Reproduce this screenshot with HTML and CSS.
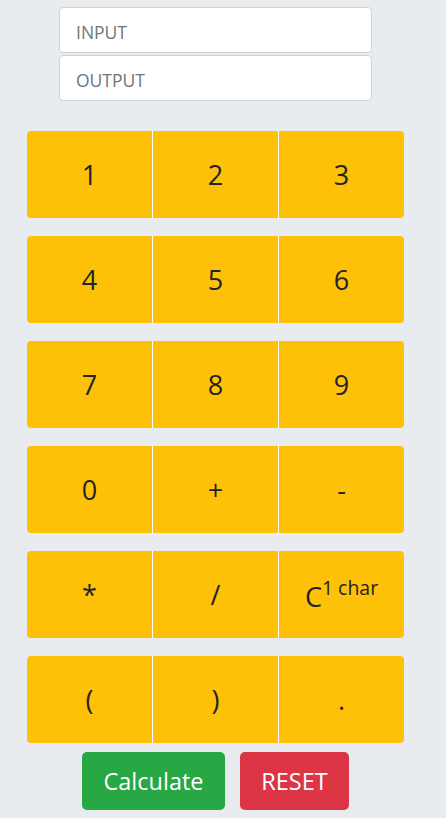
FILE: index.html
```html
<!DOCTYPE html>
<html lang="en">
<head>
<meta charset="utf-8">
<title>Calculator</title>
<link rel="stylesheet" href="styles.css">
</head>
<body>
<div class="page">
  <div class="fields">
    <input class="field" type="text" placeholder="INPUT">
    <input class="field" type="text" placeholder="OUTPUT">
  </div>
  <div class="pad">
    <div class="row"><button class="key">1</button><button class="key">2</button><button class="key">3</button></div>
    <div class="row"><button class="key">4</button><button class="key">5</button><button class="key">6</button></div>
    <div class="row"><button class="key">7</button><button class="key">8</button><button class="key">9</button></div>
    <div class="row"><button class="key">0</button><button class="key">+</button><button class="key">-</button></div>
    <div class="row"><button class="key">*</button><button class="key">/</button><button class="key">C<sup class="sup">1 char</sup></button></div>
    <div class="row"><button class="key">(</button><button class="key">)</button><button class="key">.</button></div>
  </div>
  <div class="actions">
    <button class="act calc">Calculate</button>
    <button class="act reset">RESET</button>
  </div>
</div>
</body>
</html>
```

FILE: styles.css
```css
html, body {
  margin: 0;
  padding: 0;
  background: #e9ecef;
}
body {
  font-family: "Open Sans", "Noto Sans", "Liberation Sans", sans-serif;
  color: #212529;
}
.page {
  width: 431px;
  display: flex;
  flex-direction: column;
  align-items: center;
  padding-top: 7px;
}
.fields {
  width: 313px;
  display: flex;
  flex-direction: column;
  gap: 2px;
}
.field {
  box-sizing: border-box;
  width: 313px;
  height: 46px;
  margin: 0;
  padding: 3px 16px 0;
  border: 1px solid #ced4da;
  border-radius: 4px;
  background: #fff;
  font-family: inherit;
  font-size: 17.5px;
  color: #495057;
  outline: none;
}
.field::placeholder {
  color: #6c757d;
  opacity: 1;
}
.pad {
  margin-top: 30px;
  width: 377px;
  display: flex;
  flex-direction: column;
  gap: 18px;
}
.row {
  display: flex;
  height: 87px;
}
.key {
  flex: 0 0 125px;
  margin: 0;
  padding: 0;
  border: 0;
  background: #ffc107;
  color: #212529;
  font-family: inherit;
  font-size: 27px;
  line-height: 1;
  cursor: pointer;
}
.key + .key {
  border-left: 1px solid #fff;
  flex-basis: 126px;
  box-sizing: border-box;
}
.key:first-child {
  border-radius: 4px 0 0 4px;
}
.key:last-child {
  border-radius: 0 4px 4px 0;
}
.sup {
  font-size: 72%;
  position: relative;
  top: -2px;
}
.actions {
  margin-top: 9px;
  display: flex;
  gap: 15px;
}
.act {
  height: 58px;
  margin: 0;
  border: 0;
  border-radius: 5px;
  color: #fff;
  font-family: inherit;
  font-size: 23.5px;
  cursor: pointer;
}
.calc {
  width: 143px;
  background: #28a745;
}
.reset {
  width: 109px;
  background: #dc3545;
}
```
